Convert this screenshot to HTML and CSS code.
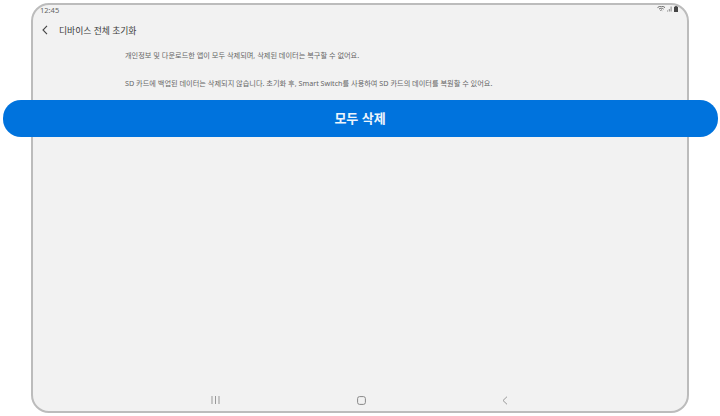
FILE: index.html
```html
<!DOCTYPE html>
<html lang="ko">
<head>
<meta charset="utf-8">
<title>디바이스 전체 초기화</title>
<link rel="stylesheet" href="styles.css">
</head>
<body>
<div class="device">
  <div class="status">
    <span class="time">12:45</span>
    <span class="status-icons">
      <svg width="9" height="6" viewBox="0 0 9 6"><path d="M0.5 1.6C2.8-.3 5.8-.3 8 1.6M2 3.1C3.5 1.9 5.2 1.9 6.6 3.1M3.4 4.6L4.3 3.8 5.2 4.6" fill="none" stroke="#666" stroke-width="1"/></svg>
      <svg width="6" height="6" viewBox="0 0 6 6"><path d="M0 5.500H1V4.500H0ZM1.800 5.500H2.800V3H1.800ZM3.600 5.500H4.600V.5H3.600Z" fill="#888"/></svg>
      <svg width="4" height="6" viewBox="0 0 4 6"><path d="M1.200 0H2.800V.7H4V6H0V.7H1.200Z" fill="#444"/></svg>
    </span>
  </div>
  <header class="header">
    <svg class="back" width="6" height="10" viewBox="0 0 6 10"><path d="M5 .8L1 5l4 4.200" fill="none" stroke="#444" stroke-width="1.100"/></svg>
    <h1 class="title">디바이스 전체 초기화</h1>
  </header>
  <main class="content">
    <p class="note">개인정보 및 다운로드한 앱이 모두 삭제되며, 삭제된 데이터는 복구할 수 없어요.</p>
    <p class="note">SD 카드에 백업된 데이터는 삭제되지 않습니다. 초기화 후, Smart Switch를 사용하여 SD 카드의 데이터를 복원할 수 있어요.</p>
  </main>
  <nav class="nav">
    <svg width="9" height="8" viewBox="0 0 9 8"><path d="M1 0V8M4.500 0V8M8 0V8" stroke="#999" stroke-width="1" fill="none"/></svg>
    <svg width="9" height="9" viewBox="0 0 9 9"><rect x=".6" y=".6" width="7.800" height="7.800" rx="2" fill="none" stroke="#888" stroke-width="1"/></svg>
    <svg width="6" height="9" viewBox="0 0 6 9"><path d="M5 .7L1 4.500 5 8.300" stroke="#999" stroke-width="1" fill="none"/></svg>
  </nav>
</div>
<button class="delete-all">모두 삭제</button>
</body>
</html>
```
FILE: styles.css
```css
html, body {
  margin: 0;
  padding: 0;
}
body {
  width: 720px;
  height: 416px;
  background: #fff;
  position: relative;
  overflow: hidden;
  font-family: "Noto Sans", "Noto Sans CJK KR", sans-serif;
}
.device {
  box-sizing: border-box;
  width: 658px;
  height: 410px;
  margin: 3px 0 0 31px;
  border: 2px solid #bcbcbc;
  border-radius: 18px;
  background: #f2f2f2;
  display: flex;
  flex-direction: column;
}
.status {
  height: 9px;
  padding: 0 9px 1px 7px;
  display: flex;
  justify-content: space-between;
  align-items: center;
}
.time {
  font-size: 7.5px;
  color: #666;
}
.status-icons {
  display: flex;
  align-items: center;
  gap: 1px;
  margin-top: -2px;
}
.header {
  height: 30px;
  padding-left: 9px;
  display: flex;
  align-items: center;
  gap: 11px;
}
.title {
  margin: 0;
  font-size: 8.800px;
  font-weight: 400;
  color: #3a3a3a;
}
.content {
  flex: 1;
  padding: 6px 0 0 92px;
}
.note {
  margin: 0 0 18.500px;
  font-size: 7.200px;
  line-height: 9px;
  color: #666;
}
.nav {
  height: 20px;
  padding: 0 179px 2px 178px;
  box-sizing: border-box;
  display: flex;
  justify-content: space-between;
  align-items: center;
}
.delete-all {
  position: absolute;
  left: 3px;
  top: 100px;
  width: 715px;
  height: 37px;
  border: 0;
  border-radius: 18px;
  background: #0073dd;
  color: #eef5fc;
  font-family: inherit;
  font-size: 13px;
  font-weight: 700;
  padding: 0 1px 2px 0;
}
```
